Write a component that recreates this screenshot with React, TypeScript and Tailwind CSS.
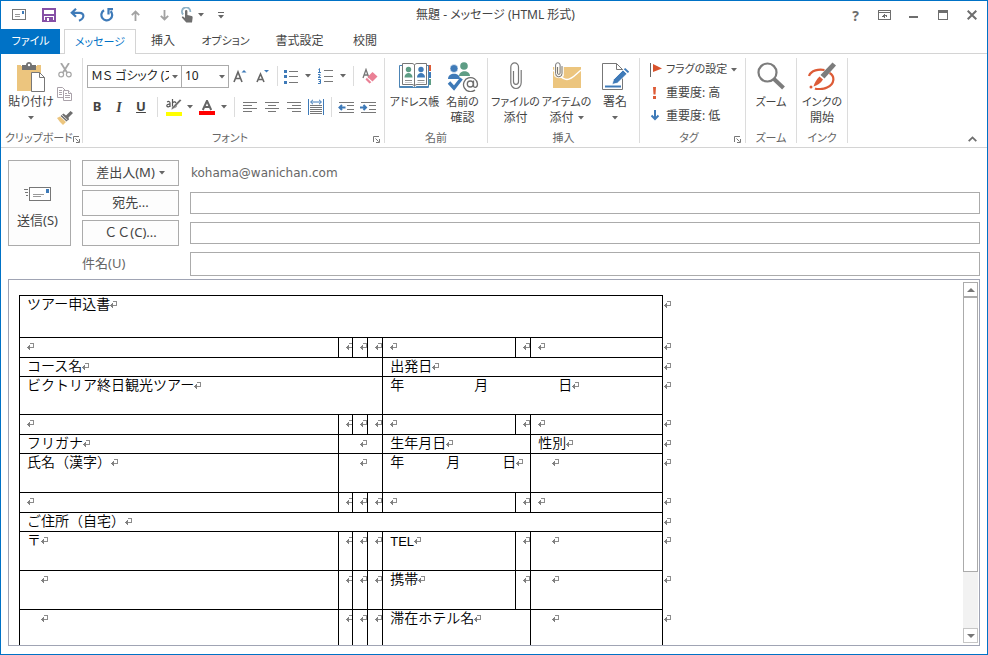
import type { ReactNode } from "react";

const BLUE = "#3e7ab8";
const GRAY = "#6e6e6e";

function Caret() {
  return (
    <svg width="6" height="4" viewBox="0 0 6 4" className="shrink-0">
      <path d="M0 0h6L3 3.5z" fill="#666" />
    </svg>
  );
}

/* ---------- title bar icons ---------- */

function MailIcon() {
  return (
    <svg width="15" height="12" viewBox="0 0 15 12" fill="none" shapeRendering="crispEdges">
      <path d="M.5 .5h13v10h-13z" stroke="#777" />
      <path d="M3 5.5h5M3 7.5h5" stroke="#999" />
      <path d="M10 2h2v3h-2z" fill={BLUE} />
    </svg>
  );
}

function SaveIcon() {
  return (
    <svg width="14" height="14" viewBox="0 0 14 14" fill="none" shapeRendering="crispEdges">
      <path d="M1 1h12v12H1z" stroke="#8650a6" strokeWidth="2" />
      <path d="M2 6h10v2H2zM3 9h8v5H3z" fill="#8650a6" />
      <path d="M5 10h2v3H5z" fill="#fff" />
    </svg>
  );
}

function UndoIcon() {
  return (
    <svg width="15" height="14" viewBox="0 0 15 14" fill="none" stroke={BLUE} strokeWidth="2.2">
      <path d="M6 .8L1.8 4.8L6 8.8M2 4.8H9.5C15 5 14.5 10.5 9 12.8" />
    </svg>
  );
}

function RedoIcon() {
  return (
    <svg width="14" height="14" viewBox="0 0 14 14" fill="none" stroke={BLUE} strokeWidth="2.2">
      <path d="M4 2.3A5.4 5.4 0 1 0 10.6 3.1" />
      <path d="M13 1.2H8.5V6.5" />
    </svg>
  );
}

function ArrowIcon({ down }: { down?: boolean }) {
  return (
    <svg width="9" height="11" viewBox="0 0 9 11" fill="none" stroke="#a2a2a2" strokeWidth="1.8">
      {down ? <path d="M4.5 0v9.5M.8 5.8L4.5 9.5L8.2 5.8" /> : <path d="M4.5 11V1.5M.8 5.2L4.5 1.5L8.2 5.2" />}
    </svg>
  );
}

function TouchIcon() {
  return (
    <svg width="12" height="16" viewBox="0 0 12 16">
      <path d="M2.2 7.5A4.2 4.2 0 1 1 9.3 5" fill="none" stroke="#8fb2c6" strokeWidth="1.8" />
      <path d="M4 4.2a1.2 1.2 0 0 1 2.4 0V8l4.2 1c1 .2 1.2 1 1 2L11 15.5H5.3L1 10.8c-.6-1 .6-1.6 1.4-1L4 11z" fill="#6f6f6f" />
    </svg>
  );
}

function MoreIcon() {
  return (
    <svg width="6" height="7" viewBox="0 0 6 7">
      <path d="M0 0h6v1H0zM0 3h6L3 6.5z" fill="#666" />
    </svg>
  );
}

function RibbonDisplayIcon() {
  return (
    <svg width="13" height="10" viewBox="0 0 13 10" fill="none" stroke={GRAY} shapeRendering="crispEdges">
      <path d="M.5 .5h12v9H.5zM1 2.5h11" />
      <path d="M6.5 4v4" />
      <path d="M4 6h1V5h3v1h1" strokeWidth="1" />
    </svg>
  );
}

function MinimizeIcon() {
  return (
    <svg width="9" height="10" viewBox="0 0 9 10">
      <path d="M0 6h9v2H0z" fill={GRAY} />
    </svg>
  );
}

function MaximizeIcon() {
  return (
    <svg width="10" height="10" viewBox="0 0 10 10" fill="none" shapeRendering="crispEdges">
      <path d="M.5 .5h9v9h-9z" stroke={GRAY} />
      <path d="M0 0h10v3H0z" fill={GRAY} />
    </svg>
  );
}

function CloseIcon() {
  return (
    <svg width="10" height="10" viewBox="0 0 10 10" stroke={GRAY} strokeWidth="2">
      <path d="M.7 .7l8.6 8.6M9.3 .7L.7 9.3" />
    </svg>
  );
}

/* ---------- ribbon icons ---------- */

function PasteIcon() {
  return (
    <svg width="28" height="30" viewBox="0 0 28 30">
      <path d="M0 3h24v26H0z" fill="#ecc57e" />
      <path d="M4 2h16v2H4z" fill="#fff" />
      <path d="M5 3h4c0-4 6-4 6 0h4v5H5z" fill="#727272" />
      <circle cx="12" cy="3" r="1.2" fill="#fff" />
      <path d="M14.5 10.5h8l5 5v14h-13z" fill="#fff" stroke="#777" />
      <path d="M22.5 10.5v5h5" fill="none" stroke="#777" />
    </svg>
  );
}

function CutIcon() {
  return (
    <svg width="14" height="15" viewBox="0 0 14 15" fill="none" stroke="#a6a6a6">
      <path d="M3 0L9 9.5M11 0L5 9.5" strokeWidth="1.8" />
      <circle cx="3.2" cy="11.5" r="2.4" strokeWidth="1.2" />
      <circle cx="10.8" cy="11.5" r="2.4" strokeWidth="1.2" />
    </svg>
  );
}

function CopyIcon() {
  return (
    <svg width="16" height="14" viewBox="0 0 16 14" fill="#fff" stroke="#aaa2aa">
      <path d="M.5 .5h5l3 3v7h-8z" />
      <path d="M2 3.5h3M2 5.5h3M2 7.5h3" />
      <path d="M6.5 3.5h5l3 3v7h-8z" />
      <path d="M11.5 3.5v3h3M8 6.5h2M8 8.5h5M8 10.5h5" />
    </svg>
  );
}

function BrushIcon() {
  return (
    <svg width="16" height="14" viewBox="0 0 16 14">
      <path d="M0 7l3-1.500L9 11l-3 3C4 12 2 10 0 7z" fill="#ecc57e" />
      <path d="M3.500 5L6.500 2.500L9 4.500L13.500 0L16 2L11.500 6.500L12 8.500L9.500 10.500z" fill="#6e6e6e" />
      <path d="M5 4l5.500 5.200" stroke="#fff" strokeWidth=".8" />
    </svg>
  );
}

function BulletsIcon() {
  return (
    <svg width="14" height="15" viewBox="0 0 14 15" shapeRendering="crispEdges">
      <path d="M0 1h3v3H0zM0 6h3v3H0zM0 12h3v3H0z" fill={BLUE} />
      <path d="M5 2h9v1H5zM5 7h9v1H5zM5 13h9v1H5z" fill="#777" />
    </svg>
  );
}

function NumberingIcon() {
  return (
    <svg width="16" height="16" viewBox="0 0 16 16" fill="none">
      <path d="M0.500 1.500l1-1V4M0 4.500h3M0 6.500h2v1.500l-2 1.500h3M0 11.500h2.500v4H0M.8 13.500h1.500" stroke={BLUE} />
      <path d="M6 2.500h9M6 8.500h9M6 13.500h9" stroke="#777" />
    </svg>
  );
}

function EraserIcon() {
  return (
    <svg width="16" height="16" viewBox="0 0 16 16" fill="none">
      <path d="M1 10L4 1.500L7 10M2 7h4" stroke="#777" strokeWidth="1.300" />
      <path d="M10.500 4L15.500 8.500L10.500 13.500L5.500 9z" fill="#ea8095" />
      <path d="M4.800 9.700L9.300 14.200L7.500 15.500L3.500 11.500z" fill="#ea8095" />
    </svg>
  );
}

function HighlightIcon() {
  return (
    <svg width="16" height="17" viewBox="0 0 16 17" fill="none">
      <path d="M1.200 3.200C2.200 2 4 2.300 4 4v4M4 5.200C2 5 .8 5.500.8 6.700S3 8.500 4 6.800M6.500 0v8M6.500 4c1-2 4-1.500 4 1.500S7.500 9 6.500 7" stroke="#555" strokeWidth="1.200" />
      <path d="M15.500 1.500L8 9.500L5 11l.8-2.500L14 0z" fill="#6e6e6e" stroke="#fff" strokeWidth=".5" />
      <path d="M0 13h16v4H0z" fill="#ff0" />
    </svg>
  );
}

function FontColorIcon() {
  return (
    <svg width="16" height="15" viewBox="0 0 16 15" fill="none">
      <path d="M3.800 10L8 .8L12.200 10M5.500 7h5" stroke="#666" strokeWidth="2" />
      <path d="M0 11h16v4H0z" fill="#f00" />
    </svg>
  );
}

function GrowFontIcon({ shrink }: { shrink?: boolean }) {
  return (
    <svg width="14" height="14" viewBox="0 0 14 14" fill="none">
      {shrink ? (
        <>
          <path d="M1 13L4.500 5L8 13M2.300 10.500h4.400" stroke="#666" strokeWidth="1.600" />
          <path d="M8 1h5l-2.500 2.500z" fill={BLUE} />
        </>
      ) : (
        <>
          <path d="M1 13L5 3L9 13M2.500 9.500h5" stroke="#666" strokeWidth="1.600" />
          <path d="M8.500 3.500h5L11 1z" fill={BLUE} />
        </>
      )}
    </svg>
  );
}

function AlignIcon({ kind }: { kind: "left" | "center" | "right" }) {
  const d = {
    left: "M0 .5h14M0 3.500h9M0 6.500h14M0 9.500h9",
    center: "M0 .5h14M3 3.500h8M0 6.500h14M3 9.500h8",
    right: "M0 .5h14M5 3.500h9M0 6.500h14M5 9.500h9",
  }[kind];
  return (
    <svg width="14" height="10" viewBox="0 0 14 10" stroke="#777">
      <path d={d} />
    </svg>
  );
}

function DistributeIcon() {
  return (
    <svg width="16" height="16" viewBox="0 0 16 16" fill="none">
      <path d="M.5 0v16M15.500 0v16M3 3h10M5 .8L2.500 3L5 5.200M11 .8L13.500 3L11 5.200" stroke={BLUE} />
      <path d="M2 6.500h12M2 8.500h12M2 10.500h12M2 12.500h12M2 14.500h12" stroke="#777" />
    </svg>
  );
}

function IndentIcon({ out }: { out?: boolean }) {
  return (
    <svg width="16" height="11" viewBox="0 0 16 11" fill="none">
      <path d="M1 .5h15M9 3.500h7M9 7.500h7M1 10.500h15" stroke="#777" />
      {out ? <path d="M7.500 5.500H1.500M4 3L1.500 5.500L4 8" stroke={BLUE} strokeWidth="2" /> : <path d="M0 5.500H6M3.500 3L6 5.500L3.500 8" stroke={BLUE} strokeWidth="2" />}
    </svg>
  );
}

function AddressBookIcon() {
  return (
    <svg width="32" height="28" viewBox="0 0 32 28">
      <path d="M29 3h3v6h-3z" fill="#dd5b36" />
      <path d="M29 10h3v6h-3z" fill={BLUE} />
      <path d="M29 17h3v6h-3z" fill="#5e9d85" />
      <path d="M.5 3.500h29v22H.5z" fill="#fff" stroke="#4c84b5" />
      <path d="M1 24h12.500l2 2l2-2H29v2H1z" fill="#4c84b5" />
      <path d="M3.500 1.500H13c1.500 0 2.500 1 2.500 2c0-1 1-2 2.500-2h9.500v21H18c-1.500 0-2.500 1-2.500 2c0-1-1-2-2.500-2H3.500z" fill="#fff" stroke="#777" />
      <path d="M15.500 3v21" stroke="#777" />
      <circle cx="9.500" cy="7.500" r="2.700" fill="#5e9d85" />
      <path d="M5.500 15.500c0-6 8-6 8 0z" fill="#5e9d85" />
      <circle cx="22" cy="7.500" r="2.700" fill={BLUE} />
      <path d="M18 15.500c0-6 8-6 8 0z" fill={BLUE} />
      <path d="M6 18.500h7M18.500 18.500h7" stroke="#888" />
      <path d="M6 20.500h7M18.500 20.500h7" stroke="#ccc" />
    </svg>
  );
}

function CheckNamesIcon() {
  return (
    <svg width="32" height="30" viewBox="0 0 32 30" fill="none">
      <circle cx="17" cy="4" r="3.800" fill="#5e9d85" />
      <path d="M12 14c0-6.500 11-6.500 11 0z" fill="#5e9d85" />
      <circle cx="7" cy="6.500" r="4" fill={BLUE} stroke="#fff" strokeWidth=".6" />
      <path d="M1 17c0-7 12-7 12 0z" fill={BLUE} />
      <path d="M2 20.500l5 5.500l7.500-9.500" stroke={BLUE} strokeWidth="3.400" />
      <circle cx="23.500" cy="22" r="7.700" fill="#fff" />
      <path d="M28 28A7 7 0 1 1 30.500 22c0 4-4 4.500-4 1.500v-5" stroke="#6e6e6e" strokeWidth="1.300" />
      <circle cx="23.300" cy="22" r="3" stroke="#6e6e6e" strokeWidth="1.300" />
    </svg>
  );
}

function ClipIcon() {
  return (
    <svg width="12" height="28" viewBox="0 0 12 28" fill="none" stroke="#777" strokeWidth="1.200">
      <path d="M3.500 9v10.500a2.500 2.800 0 0 0 5 0V5a3.800 4 0 0 0-7.700 0v15.500a5.200 6 0 0 0 10.400 0V8" />
    </svg>
  );
}

function AttachItemIcon() {
  return (
    <svg width="28" height="28" viewBox="0 0 28 28" fill="none">
      <path d="M0 5h28v21H0z" fill="#ecc57e" />
      <path d="M0 8c5 4 9 9.500 14 9.500S23 12 28 8" stroke="#fff" strokeWidth="1.400" />
      <path d="M1 0h10v14c-3 3-7 3-10 0z" fill="#fff" opacity=".8" />
      <path d="M4.500 5v6a1.300 1.500 0 0 0 2.600 0V3a2.200 2.200 0 0 0-4.500 0v8.500a3.200 3.300 0 0 0 6.400 0V4" stroke="#777" />
    </svg>
  );
}

function SignatureIcon() {
  return (
    <svg width="28" height="29" viewBox="0 0 28 29" fill="none">
      <path d="M1.500 1.500h14l6 6v20h-20z" fill="#fff" stroke="#777" />
      <path d="M15.500 1.500v6h6" stroke="#777" />
      <path d="M4 24.500h16" stroke={BLUE} strokeWidth="2" />
      <path d="M11 22.500l1.500-5L22 8l4 3.800l-9.500 9.300z" fill={BLUE} stroke="#fff" strokeWidth=".8" />
      <path d="M22.800 7.200l1.400-1.200l4 3.700l-1.400 1.300z" fill={BLUE} />
    </svg>
  );
}

function FlagIcon() {
  return (
    <svg width="12" height="14" viewBox="0 0 12 14">
      <path d="M0 0h1v14H0z" fill="#666" />
      <path d="M3 1l9 4.500L3 9z" fill="#d9532c" />
    </svg>
  );
}

function ImportantIcon() {
  return (
    <svg width="12" height="12" viewBox="0 0 12 12">
      <path d="M3 0h3L5.500 7.500h-2zM3 9h3v3H3z" fill="#dd5b36" />
    </svg>
  );
}

function LowIcon() {
  return (
    <svg width="12" height="11" viewBox="0 0 12 11" fill="none" stroke={BLUE} strokeWidth="2">
      <path d="M5 0v9M1.500 5.500l3.500 3.500l3.500-3.500" />
    </svg>
  );
}

function ZoomIcon() {
  return (
    <svg width="28" height="28" viewBox="0 0 28 28" fill="none" stroke="#7c7c7c">
      <circle cx="10.500" cy="10.500" r="9" strokeWidth="2.200" />
      <path d="M17 17l9.500 9" strokeWidth="4" />
    </svg>
  );
}

function InkIcon() {
  return (
    <svg width="28" height="28" viewBox="0 0 28 28" fill="none">
      <path d="M1 14C3 8 11 7 16.500 8M21.500 11C27 14 27 22 19 25.500C15 27.500 9 27.500 7 26.500" stroke="#dd5b36" strokeWidth="2.200" />
      <path d="M24.500 0.500L28 3.500L16.500 16.500L12.500 13z" fill="#7c7c7c" />
      <path d="M11.500 14.500L15 17.500C13 21 9 23.500 5.500 24.500C6.500 21 8.500 17 11.500 14.500z" fill="#dd5b36" />
      <circle cx="3" cy="25" r="1.500" fill="#dd5b36" />
    </svg>
  );
}

function LauncherIcon() {
  return (
    <svg width="7" height="7" viewBox="0 0 7 7" fill="none" stroke="#777">
      <path d="M.5 6V.5H6M2.500 2.500l3 3M6.500 3v3.500H3" />
    </svg>
  );
}

function SendIcon() {
  return (
    <svg width="28" height="14" viewBox="0 0 28 14" fill="none" shapeRendering="crispEdges">
      <path d="M5.500 .5h21v13h-21z" stroke="#777" fill="#fff" />
      <path d="M9 7.500h11M9 9.500h8" stroke="#999" />
      <path d="M22 2h3v4h-3z" fill={BLUE} />
      <path d="M0 2.500h4M1 5.500h3M2 8.500h2" stroke="#777" />
    </svg>
  );
}

/* ---------- ribbon parts ---------- */

function Slot({ w, label, children }: { w: string; label: string; children: ReactNode }) {
  return (
    <button type="button" aria-label={label} className={`flex h-6 shrink-0 items-center justify-center ${w}`}>
      {children}
    </button>
  );
}

function Divider({ w }: { w: string }) {
  return (
    <div className={`flex shrink-0 justify-center ${w}`}>
      <div className="h-5 w-px bg-[#dcdcdc]" />
    </div>
  );
}

function Group({ w, label, launcher, children }: { w: string; label: string; launcher?: boolean; children: ReactNode }) {
  return (
    <section aria-label={label} className={`flex shrink-0 flex-col border-r border-[#dcdcdc] ${w}`}>
      <div className="flex-1">{children}</div>
      <div className="flex h-2.5 items-center px-1 text-[11px] text-[#666]">
        <span className="flex-1 text-center leading-3 whitespace-nowrap">{label}</span>
        {launcher && (
          <button type="button" aria-label={`${label}の詳細`} className="pt-0.5">
            <LauncherIcon />
          </button>
        )}
      </div>
    </section>
  );
}

function BigButton({ w, icon, lines, caret, small }: { w: string; icon: ReactNode; lines: string[]; caret?: boolean; small?: boolean }) {
  return (
    <button type="button" className={`flex shrink-0 flex-col items-center pt-1 leading-4 whitespace-nowrap ${w}`}>
      <span className="flex h-8 items-start justify-center">{icon}</span>
      <span className={small ? "text-[11px]" : ""}>{lines[0]}</span>
      <span className="flex h-4 items-center gap-1">
        {lines[1]}
        {caret && <Caret />}
      </span>
    </button>
  );
}

function TagButton({ icon, text, caret }: { icon: ReactNode; text: string; caret?: boolean }) {
  return (
    <button type="button" className="flex h-[23px] items-center gap-1 whitespace-nowrap">
      {icon}
      <span className={caret ? "text-[11px]" : ""}>{text}</span>
      {caret && <Caret />}
    </button>
  );
}

function TitleSlot({ w = "w-[29px]", label, children }: { w?: string; label: string; children: ReactNode }) {
  return (
    <button type="button" aria-label={label} className={`flex h-full items-center justify-center ${w}`}>
      {children}
    </button>
  );
}

function Combo({ w, label, value }: { w: string; label: string; value: string }) {
  return (
    <div className={`relative -mr-px shrink-0 ${w}`}>
      <select aria-label={label} className="h-[23px] w-full appearance-none border border-[#ababab] bg-white pr-3 pl-[3px] text-[12px] leading-5 text-[#222]">
        <option>{value}</option>
      </select>
      <span className="pointer-events-none absolute top-[10px] right-1">
        <Caret />
      </span>
    </div>
  );
}

/* ---------- document ---------- */

function ReturnMark() {
  return (
    <svg width="7" height="8" viewBox="0 0 7 8" fill="none" className="inline-block shrink-0" shapeRendering="crispEdges">
      <path d="M3 0h4v5H3V4h3V1H3z" fill="#8c8c8c" />
      <path d="M0 4h1V3h1V2h1v5H2V6H1V5H0z" fill="#808080" />
    </svg>
  );
}

type Cell = { t?: string; span?: number; latin?: boolean };

const blank: Cell[] = [{}, {}, {}, {}, {}, {}, {}];

const rows: { h: string; cells: Cell[] }[] = [
  { h: "h-[42px]", cells: [{ t: "ツアー申込書", span: 7 }] },
  { h: "h-[20px]", cells: blank },
  { h: "h-[19px]", cells: [{ t: "コース名", span: 4 }, { t: "出発日", span: 3 }] },
  {
    h: "h-[38px]",
    cells: [
      { t: "ビクトリア終日観光ツアー", span: 4 },
      { t: "年\u3000\u3000\u3000\u3000\u3000月\u3000\u3000\u3000\u3000\u3000日", span: 3 },
    ],
  },
  { h: "h-[20px]", cells: blank },
  { h: "h-[19px]", cells: [{ t: "フリガナ" }, { t: "\u3000", span: 3 }, { t: "生年月日", span: 2 }, { t: "性別" }] },
  {
    h: "h-[39px]",
    cells: [
      { t: "氏名（漢字）" },
      { t: "\u3000", span: 3 },
      { t: "年\u3000\u3000\u3000月\u3000\u3000\u3000日", span: 2 },
      { t: "\u3000" },
    ],
  },
  { h: "h-[20px]", cells: blank },
  { h: "h-[19px]", cells: [{ t: "ご住所（自宅）", span: 7 }] },
  { h: "h-[39px]", cells: [{ t: "〒" }, {}, {}, {}, { t: "TEL", latin: true }, {}, { t: "\u3000" }] },
  { h: "h-[39px]", cells: [{ t: "\u3000" }, {}, {}, {}, { t: "携帯" }, {}, { t: "\u3000" }] },
  { h: "h-[39px]", cells: [{ t: "\u3000" }, {}, {}, {}, { t: "滞在ホテル名", span: 2 }, { t: "\u3000" }] },
];

function DocumentTable() {
  return (
    <table className="w-[654px] table-fixed border-collapse font-['Noto_Sans_CJK_JP',sans-serif] text-[14px] leading-[15px] font-[350] text-black [font-feature-settings:normal]">
      <colgroup>
        <col className="w-[319px]" />
        <col className="w-[14px]" />
        <col className="w-[15px]" />
        <col className="w-[15px]" />
        <col className="w-[133px]" />
        <col className="w-[15px]" />
        <col className="w-[132px]" />
        <col className="w-[10px]" />
      </colgroup>
      <tbody>
        {rows.map((row, i) => (
          <tr key={i} className={row.h}>
            {row.cells.map((cell, j) => (
              <td key={j} colSpan={cell.span} className="border border-black p-0 align-top">
                <div className={`flex h-[18px] items-center pl-[7px] whitespace-pre ${cell.t ? "" : "overflow-hidden"}`}>
                  {cell.t && <span className={cell.latin ? "font-['Liberation_Sans',sans-serif] text-[13px]" : "pb-[3px]"}>{cell.t}</span>}
                  <ReturnMark />
                </div>
              </td>
            ))}
            <td className="p-0 align-top">
              <div className="flex h-[18px] items-center pl-px">
                <ReturnMark />
              </div>
            </td>
          </tr>
        ))}
      </tbody>
    </table>
  );
}

function ScrollBar() {
  return (
    <div className="mt-0.5 mr-px mb-0.5 flex w-[15px] shrink-0 flex-col bg-[#f2f2f2]">
      <button type="button" aria-label="上へスクロール" className="flex h-[15px] items-center justify-center border border-[#ababab] bg-white">
        <svg width="8" height="4" viewBox="0 0 8 4">
          <path d="M4 0l4 4H0z" fill="#777" />
        </svg>
      </button>
      <div className="min-h-0 flex-1">
        <div className="h-[83%] border border-[#ababab] bg-white" />
      </div>
      <button type="button" aria-label="下へスクロール" className="flex h-[15px] items-center justify-center border border-[#c6c6c6] bg-white">
        <svg width="8" height="4" viewBox="0 0 8 4">
          <path d="M0 0h8L4 4z" fill="#777" />
        </svg>
      </button>
    </div>
  );
}

const fieldButton = "flex h-[26px] w-[97px] shrink-0 items-center justify-center gap-1 border border-[#ababab] bg-[#fdfdfd] text-[13px] text-[#444]";
const fieldInput = "min-w-0 flex-1 border border-[#ababab] bg-white px-1 outline-none";

export default function App() {
  return (
    <div className="flex h-screen flex-col overflow-hidden border border-[#0072c6] bg-white font-['Noto_Sans','Noto_Sans_CJK_JP',sans-serif] text-[12px] text-[#444] [font-feature-settings:'palt']">
      <header className="flex h-7 shrink-0 items-center">
        <div className="flex h-full flex-1 pl-1">
          <TitleSlot label="メッセージ"><MailIcon /></TitleSlot>
          <TitleSlot label="保存"><SaveIcon /></TitleSlot>
          <TitleSlot label="元に戻す"><UndoIcon /></TitleSlot>
          <TitleSlot label="やり直し"><RedoIcon /></TitleSlot>
          <TitleSlot label="前へ"><ArrowIcon /></TitleSlot>
          <TitleSlot label="次へ"><ArrowIcon down /></TitleSlot>
          <TitleSlot w="w-4" label="タッチ/マウス モード"><TouchIcon /></TitleSlot>
          <TitleSlot w="w-3" label="モードの一覧"><Caret /></TitleSlot>
          <TitleSlot w="w-7" label="クイック アクセスのカスタマイズ"><MoreIcon /></TitleSlot>
        </div>
        <h1 className="whitespace-nowrap">無題 - メッセージ (HTML 形式)</h1>
        <div className="flex h-full flex-1 justify-end pr-px">
          <TitleSlot label="ヘルプ"><span className="text-[14px] font-bold text-[#6e6e6e]">?</span></TitleSlot>
          <TitleSlot label="リボンの表示オプション"><RibbonDisplayIcon /></TitleSlot>
          <TitleSlot label="最小化"><MinimizeIcon /></TitleSlot>
          <TitleSlot label="最大化"><MaximizeIcon /></TitleSlot>
          <TitleSlot label="閉じる"><CloseIcon /></TitleSlot>
        </div>
      </header>

      <nav className="flex h-[25px] shrink-0 border-b border-[#d4d4d4] whitespace-nowrap">
        <button type="button" className="-mb-px w-[59px] bg-[#0072c6] text-[11px] text-white">ファイル</button>
        <button type="button" className="-mb-px ml-1 w-[72px] border border-b-0 border-[#d4d4d4] bg-white text-[11px] text-[#0072c6]">メッセージ</button>
        <button type="button" className="w-[54px]">挿入</button>
        <button type="button" className="w-[71px] text-[11px]">オプション</button>
        <button type="button" className="w-[77px]">書式設定</button>
        <button type="button" className="w-[54px]">校閲</button>
      </nav>

      <div className="flex h-[94px] shrink-0 border-b border-[#d4d4d4] py-1">
        <Group w="w-[82px]" label="クリップボード" launcher>
          <div className="flex">
            <BigButton w="w-[56px] pl-1" icon={<PasteIcon />} lines={["貼り付け", ""]} caret />
            <div className="flex flex-col">
              <Slot w="w-4" label="切り取り"><CutIcon /></Slot>
              <Slot w="w-4" label="コピー"><CopyIcon /></Slot>
              <Slot w="w-4" label="書式のコピー"><BrushIcon /></Slot>
            </div>
          </div>
        </Group>

        <Group w="w-[302px]" label="フォント" launcher>
          <div className="flex items-center pt-1.5 pl-1">
            <Combo w="w-[95px]" label="フォント" value="ＭＳ ゴシック (ス" />
            <Combo w="w-[48px]" label="フォント サイズ" value="10" />
            <Slot w="w-6" label="フォントの拡大"><GrowFontIcon /></Slot>
            <Slot w="w-[22px]" label="フォントの縮小"><GrowFontIcon shrink /></Slot>
            <Divider w="w-1.5" />
            <Slot w="w-[22px]" label="箇条書き"><BulletsIcon /></Slot>
            <Slot w="w-3" label="箇条書きの一覧"><Caret /></Slot>
            <Slot w="w-6" label="段落番号"><NumberingIcon /></Slot>
            <Slot w="w-2.5" label="段落番号の一覧"><Caret /></Slot>
            <Divider w="w-2.5" />
            <Slot w="w-6" label="書式のクリア"><EraserIcon /></Slot>
          </div>
          <div className="flex items-center pt-[7px] pl-1 text-[13px]">
            <Slot w="w-5" label="太字"><b>B</b></Slot>
            <Slot w="w-6" label="斜体"><i className="font-['Liberation_Serif',serif] text-[14px] font-bold">I</i></Slot>
            <Slot w="w-5" label="下線"><span className="font-bold underline">U</span></Slot>
            <Divider w="w-3" />
            <Slot w="w-[22px]" label="蛍光ペン"><HighlightIcon /></Slot>
            <Slot w="w-2.5" label="蛍光ペンの色"><Caret /></Slot>
            <Slot w="w-6" label="フォントの色"><FontColorIcon /></Slot>
            <Slot w="w-2.5" label="フォントの色の一覧"><Caret /></Slot>
            <Divider w="w-2.5" />
            <Slot w="w-[22px]" label="左揃え"><AlignIcon kind="left" /></Slot>
            <Slot w="w-[22px]" label="中央揃え"><AlignIcon kind="center" /></Slot>
            <Slot w="w-[22px]" label="右揃え"><AlignIcon kind="right" /></Slot>
            <Slot w="w-[22px]" label="均等割り付け"><DistributeIcon /></Slot>
            <Divider w="w-2" />
            <Slot w="w-[22px]" label="インデントを減らす"><IndentIcon out /></Slot>
            <Slot w="w-[22px]" label="インデントを増やす"><IndentIcon /></Slot>
          </div>
        </Group>

        <Group w="w-[103px]" label="名前">
          <div className="flex pl-1">
            <BigButton w="w-[51px]" icon={<AddressBookIcon />} lines={["アドレス帳", ""]} small />
            <BigButton w="w-[45px]" icon={<CheckNamesIcon />} lines={["名前の", "確認"]} small />
          </div>
        </Group>

        <Group w="w-[152px]" label="挿入">
          <div className="flex pl-0.5">
            <BigButton w="w-[51px]" icon={<ClipIcon />} lines={["ファイルの", "添付"]} small />
            <BigButton w="w-[51px]" icon={<AttachItemIcon />} lines={["アイテムの", "添付"]} caret small />
            <BigButton w="w-[46px]" icon={<SignatureIcon />} lines={["署名", ""]} caret />
          </div>
        </Group>

        <Group w="w-[106px]" label="タグ" launcher>
          <div className="flex flex-col pl-2.5">
            <TagButton icon={<FlagIcon />} text="フラグの設定" caret />
            <TagButton icon={<ImportantIcon />} text="重要度: 高" />
            <TagButton icon={<LowIcon />} text="重要度: 低" />
          </div>
        </Group>

        <Group w="w-[51px]" label="ズーム">
          <BigButton w="w-full" icon={<ZoomIcon />} lines={["ズーム", ""]} small />
        </Group>

        <Group w="w-[51px]" label="インク">
          <BigButton w="w-full" icon={<InkIcon />} lines={["インクの", "開始"]} small />
        </Group>

        <button type="button" aria-label="リボンを折りたたむ" className="mt-auto mr-2.5 mb-px ml-auto">
          <svg width="9" height="6" viewBox="0 0 9 6" fill="none" stroke="#6e6e6e" strokeWidth="1.800">
            <path d="M.7 5.200L4.500 1.400L8.300 5.200" />
          </svg>
        </button>
      </div>

      <form className="flex shrink-0 gap-[11px] pt-3 pr-[7px] pl-[7px] text-[13px]">
        <button type="button" className="flex h-[86px] w-[63px] shrink-0 flex-col items-center justify-center gap-2.5 border border-[#ababab] bg-[#fdfdfd] pt-3 pr-1">
          <SendIcon />
          <span>送信(S)</span>
        </button>
        <div className="flex min-w-0 flex-1 flex-col gap-1">
          <div className="flex items-center gap-3">
            <button type="button" className={fieldButton}>差出人(M) <Caret /></button>
            <span className="font-['DejaVu_Sans',sans-serif] text-[12px] text-[#666]">kohama@wanichan.com</span>
          </div>
          <div className="flex items-center gap-[11px]">
            <button type="button" className={fieldButton}>宛先...</button>
            <input type="text" aria-label="宛先" className={`h-[22px] ${fieldInput}`} />
          </div>
          <div className="flex items-center gap-[11px]">
            <button type="button" className={fieldButton}>
              <span className="[font-feature-settings:normal]">ＣＣ(C)...</span>
            </button>
            <input type="text" aria-label="ＣＣ" className={`h-[22px] ${fieldInput}`} />
          </div>
          <div className="flex h-7 items-center gap-[11px]">
            <label htmlFor="subject" className="w-[97px] shrink-0 text-[#666]">件名(U)</label>
            <input id="subject" type="text" className={`h-6 ${fieldInput}`} />
          </div>
        </div>
      </form>

      <main className="mx-[7px] mt-px mb-2 flex min-h-0 flex-1 border border-[#a0a4b4]">
        <div className="min-w-0 flex-1 overflow-hidden pt-[15px] pl-2.5">
          <DocumentTable />
        </div>
        <ScrollBar />
      </main>
    </div>
  );
}
